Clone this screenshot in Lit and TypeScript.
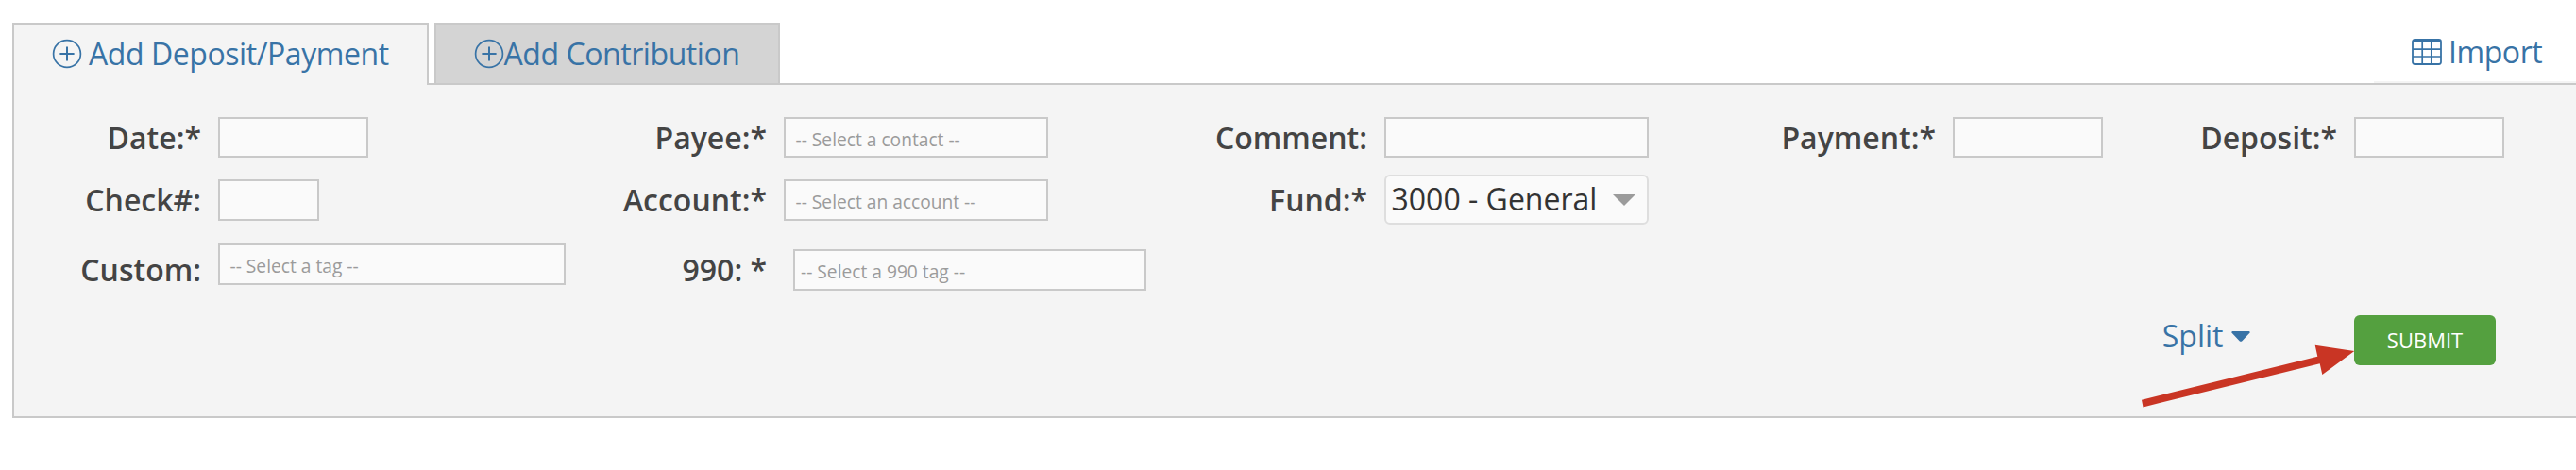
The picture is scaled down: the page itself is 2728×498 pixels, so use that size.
import { LitElement, html, css, svg } from "lit";
import { customElement } from "lit/decorators.js";

const plusIcon = svg`
  <svg class="plus" viewBox="0 0 32 32" width="32" height="32" fill="none" stroke="currentColor" stroke-width="1.7">
    <circle cx="16" cy="16" r="14.4" />
    <path d="M16 8.4v15.2M8.4 16h15.2" stroke-width="2" />
  </svg>`;

const tableIcon = svg`
  <svg class="table" viewBox="0 0 32 28" width="32" height="28">
    <rect x="1" y="1" width="30" height="26" rx="2.2" fill="none" stroke="currentColor" stroke-width="1.8" />
    <path d="M1 2h30v2H1z" fill="currentColor" />
    <path d="M11.2 3v24M20.8 3v24M1 11.2h30M1 19h30" fill="none" stroke="currentColor" stroke-width="1.7" />
  </svg>`;

@customElement("app-root")
export class AppRoot extends LitElement {
  static styles = css`
    :host {
      display: block;
      position: relative;
      height: 498px;
      overflow: hidden;
      background: #fff;
      color: #444;
      font-family: "Open Sans", sans-serif;
      font-size: 32px;
      line-height: 44px;
      white-space: nowrap;
    }
    * { box-sizing: border-box; }
    svg { display: block; flex: none; }
    .bar {
      display: flex;
      height: 88px;
      padding: 24px 0 0 13px;
      color: #3873a6;
      letter-spacing: -0.43px;
    }
    .tab {
      display: flex;
      height: 64px;
      padding: 9px 0 0 39.5px;
      border: 2px solid #c9c9c9;
      border-bottom: 0;
    }
    .plus { margin-top: 6px; }
    .active {
      width: 441px;
      height: 66px;
      background: #f4f4f4;
      z-index: 1;
    }
    .active .plus { margin-right: 7.5px; }
    .idle {
      width: 366px;
      margin-left: 6px;
      background: #d4d4d4;
    }
    .import {
      display: flex;
      width: 214px;
      margin-left: auto;
      padding: 9px 0 0 40px;
      border-bottom: 2px solid #f4f4f4;
    }
    .table { margin: 8px 7px 0 0; }
    .panel {
      display: grid;
      height: 355px;
      margin-left: 13px;
      padding-top: 34px;
      border: 2px solid #c9c9c9;
      border-right: 0;
      background: #f4f4f4;
      grid-template-columns: 198px 368px 195px 384px 216px 280px 286px 159px 230px 159px;
      grid-template-rows: 66px 68px 76px 54px;
      column-gap: 18px;
      align-items: start;
    }
    .label {
      justify-self: end;
      font-weight: 600;
    }
    .box {
      height: 44px;
      padding-left: 10.5px;
      border: 2px solid #c9c9c9;
      background: #fafafa;
      color: #9b9b9b;
      font-size: 19.2px;
      line-height: 44px;
    }
    .row1 { height: 43px; }
    .w107 { width: 107px; }
    .w159 { width: 159px; }
    .w280 { width: 280px; }
    .drop { margin-top: 6px; }
    .tag990 {
      width: 374px;
      margin: 6px 0 0 10px;
      padding-left: 6px;
    }
    .select {
      display: flex;
      justify-content: space-between;
      height: 53px;
      margin-top: -5px;
      padding: 2px 12px 0 5.5px;
      border: 2px solid #dedede;
      border-radius: 6px;
      background: #fafafa;
      color: #333;
    }
    .select svg { margin-top: 17px; }
    .split {
      grid-area: 4 / 9;
      display: flex;
      justify-self: end;
      padding-right: 92.5px;
      color: #3873a6;
    }
    .split svg { margin: 17px 0 0 8px; }
    .submit {
      grid-area: 4 / 10;
      width: 150px;
      height: 53px;
      border: 0;
      border-radius: 6px;
      padding: 0;
      background: #54a03f;
      color: #fff;
      font: 22px/53px "Open Sans", sans-serif;
    }
    .pointer {
      position: absolute;
      left: 2260px;
      top: 360px;
      pointer-events: none;
    }
  `;

  render() {
    return html`
      <nav class="bar">
        <a class="tab active">${plusIcon}<span>Add Deposit/Payment</span></a>
        <a class="tab idle">${plusIcon}<span>Add Contribution</span></a>
        <a class="import">${tableIcon}<span>Import</span></a>
      </nav>
      <section class="panel">
        <span class="label">Date:*</span><div class="box row1 w159"></div>
        <span class="label">Payee:*</span><div class="box row1 w280">-- Select a contact --</div>
        <span class="label">Comment:</span><div class="box row1"></div>
        <span class="label">Payment:*</span><div class="box row1"></div>
        <span class="label">Deposit:*</span><div class="box row1"></div>

        <span class="label">Check#:</span><div class="box w107"></div>
        <span class="label">Account:*</span><div class="box w280">-- Select an account --</div>
        <span class="label">Fund:*</span>
        <div class="select">
          <span>3000 - General</span>
          <svg viewBox="0 0 24 12" width="24" height="12"><path d="M0 0h24L12 12z" fill="#9b9b9b" /></svg>
        </div>
        <i></i><i></i><i></i><i></i>

        <span class="label drop">Custom:</span><div class="box">-- Select a tag --</div>
        <span class="label drop">990: *</span><div class="box tag990">-- Select a 990 tag --</div>

        <a class="split">
          <span>Split</span>
          <svg viewBox="0 0 20 11" width="20" height="11">
            <path d="M1.2 0h17.6q1.5.6.6 1.8l-8 8.4q-1.4 1.2-2.8 0l-8-8.4q-.9-1.2.6-1.8z" fill="currentColor" />
          </svg>
        </a>
        <button class="submit">SUBMIT</button>
      </section>
      <svg class="pointer" viewBox="2260 360 240 80" width="240" height="80">
        <path d="M2268 423.8L2454.3 377.8L2451.7 365.7L2493.3 372L2459.3 397L2456.7 385.2L2269.5 431.4z" fill="#c93524" />
      </svg>
    `;
  }
}
